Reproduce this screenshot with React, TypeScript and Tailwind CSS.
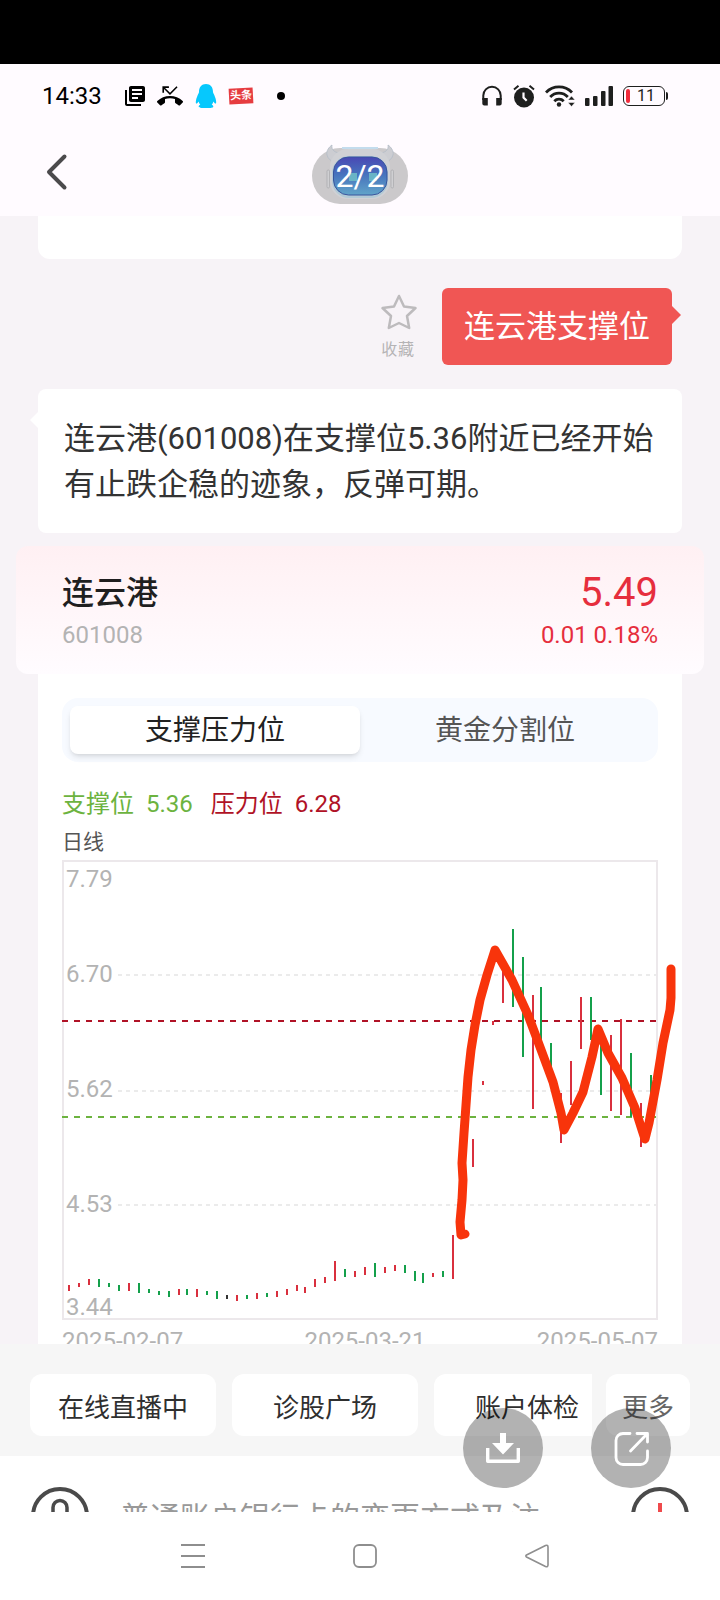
import { useState } from 'react';
import { MdLibraryBooks, MdPhoneMissed } from 'react-icons/md';

type Candle = [x: number, top: number, bottom: number, color: 'r' | 'g' | 'k'];

const COLORS = { r: '#d9303e', g: '#14a04b', k: '#333333' };

const CANDLES: Candle[] = [
    [7, 425, 431, 'r'], [17, 423, 427, 'r'], [27, 419, 425, 'r'], [37, 419, 427, 'g'],
    [47, 423, 427, 'g'], [57, 425, 431, 'g'], [67, 423, 431, 'r'], [77, 423, 433, 'g'],
    [87, 429, 433, 'g'], [97, 431, 435, 'g'], [107, 431, 437, 'g'], [117, 429, 435, 'r'],
    [125, 429, 435, 'g'], [135, 429, 437, 'r'], [145, 431, 435, 'g'], [155, 431, 439, 'g'],
    [165, 435, 439, 'k'], [175, 435, 441, 'r'], [185, 435, 439, 'g'], [195, 433, 439, 'r'],
    [205, 433, 437, 'g'], [215, 431, 437, 'r'], [225, 429, 435, 'r'], [235, 425, 431, 'r'],
    [243, 427, 433, 'r'], [253, 419, 427, 'r'], [263, 417, 423, 'r'], [273, 401, 421, 'r'],
    [283, 409, 417, 'g'], [293, 411, 417, 'r'], [303, 407, 415, 'r'], [313, 403, 417, 'g'],
    [323, 407, 413, 'r'], [333, 405, 411, 'r'], [343, 405, 413, 'g'], [353, 411, 421, 'g'],
    [361, 413, 423, 'g'], [371, 413, 417, 'r'], [381, 411, 417, 'g'], [391, 375, 419, 'r'],
    [411, 279, 307, 'r'], [421, 221, 225, 'r'], [431, 161, 165, 'r'], [441, 105, 143, 'r'],
    [451, 69, 147, 'g'], [461, 97, 197, 'g'], [471, 135, 249, 'r'], [479, 127, 187, 'g'],
    [489, 183, 215, 'g'], [499, 233, 283, 'r'], [509, 201, 245, 'r'], [519, 137, 189, 'r'],
    [529, 137, 180, 'g'], [539, 175, 235, 'g'], [549, 175, 251, 'r'], [559, 159, 255, 'r'],
    [569, 193, 257, 'g'], [579, 243, 287, 'r'], [589, 215, 240, 'g'],
];

// Trazo dibujado a mano sobre la gráfica
const MARKER =
    '403,374 399,375 398,362 400,340 401,320 400,303 402,273 406,217 409,190 413,165 418,140 425,115 433,90 450,120 466,155 478,187 491,222 499,253 502,270 511,253 521,232 530,197 536,169 546,193 560,218 573,248 580,270 583,279 587,263 595,220 601,183 608,150 609,138 609,109';

function StatusBar() {
    return (
        <div className="flex h-16 items-center pl-[42px] pr-[52px] text-[#1e1f1e]">
            <span className="w-[81px] text-2xl text-black">14:33</span>
            <MdLibraryBooks className="h-6 w-6 text-black" />
            <MdPhoneMissed className="ml-2.5 h-[26px] w-[26px] text-black" />
            <svg className="ml-3 h-6 w-[22px]" viewBox="0 0 22 24" fill="#06c8fd">
                <path d="M11 0C6.500 0 4 3 4 8c0 1-1 2-2 5-1 2.500-1.500 5-1 6.500.8.4 1.800-.8 2.600-2 .3 1.300.8 2.300 1.700 3.200-1 .4-1.600 1-1.600 2 0 1 2.300 1.300 7.300 1.300s7.300-.3 7.300-1.300c0-1-.6-1.600-1.600-2 .9-.9 1.400-1.900 1.700-3.200.8 1.200 1.800 2.400 2.600 2 .5-1.500 0-4-1-6.500-1-3-2-4-2-5 0-5-2.500-8-7-8z" />
            </svg>
            <span className="ml-3 flex h-4 w-6 -rotate-3 items-center justify-center bg-[#e63c40] text-[11px] font-bold text-white">
                头条
            </span>
            <span className="ml-6 h-2 w-2 rounded-full bg-black" />

            <div className="ml-auto flex items-center gap-2.5">
                <svg className="h-6 w-[22px]" viewBox="0 0 22 24" fill="currentColor">
                    <path d="M2.300 16v-4.500a8.700 8.700 0 0 1 17.400 0V16" fill="none" stroke="currentColor" strokeWidth="2" />
                    <path d="M1.300 14h5.500v7.500h-3.500a2 2 0 0 1-2-2zM15.200 14h5.500v5.500a2 2 0 0 1-2 2h-3.500z" />
                </svg>
                <svg className="h-6 w-[22px]" viewBox="0 0 22 24" fill="currentColor">
                    <circle cx="11" cy="13.500" r="10" />
                    <path d="M1 5.500 5.500 1.800M21 5.500l-4.500-3.700" stroke="currentColor" strokeWidth="2" />
                    <path d="M10.500 8.500v5l3.200 3.200" fill="none" stroke="#fffbff" strokeWidth="2.200" />
                </svg>
                <svg className="h-6 w-[30px]" viewBox="0 0 30 24" fill="none" stroke="currentColor" strokeWidth="2.800">
                    <path d="M1 8.500a18 18 0 0 1 26 0M5.200 13a12 12 0 0 1 17.600 0M9.300 17.200a6.500 6.500 0 0 1 9.400 0" />
                    <circle cx="14" cy="20.500" r="2.200" fill="currentColor" stroke="none" />
                    <path d="m23 16 3.500-4 3.500 4zM23 18.500l3.500 4 3.500-4z" fill="currentColor" stroke="#fffbff" strokeWidth="0.500" />
                </svg>
                <div className="flex items-center gap-2">
                    <svg className="h-6 w-7" viewBox="0 0 28 24" fill="currentColor">
                        <rect x="0" y="14" width="4.500" height="8" rx="1" />
                        <rect x="8" y="12" width="4.500" height="10" rx="1" />
                        <rect x="16" y="7" width="4.500" height="15" rx="1" />
                        <rect x="23.500" y="2" width="4.500" height="20" rx="1" />
                    </svg>
                    <div className="ml-0.5 flex items-center gap-px">
                        <div className="flex h-5 w-[42px] items-center rounded-md border border-[#1e1f1e] p-0.5">
                            <span className="h-full w-1 rounded-sm bg-[#f02c3c]" />
                            <span className="flex-1 text-center text-base leading-4">11</span>
                        </div>
                        <span className="h-2 w-0.5 rounded-r bg-[#1e1f1e]" />
                    </div>
                </div>
            </div>
        </div>
    );
}

function Header() {
    return (
        <header className="grid h-22 grid-cols-3 items-center px-10">
            <button className="w-8 text-[#4b4a4c]" aria-label="返回">
                <svg className="h-10 w-8" viewBox="0 0 32 40" fill="none" stroke="currentColor" strokeWidth="4" strokeLinecap="round" strokeLinejoin="round">
                    <path d="M24.500 4.500 9 20 24.500 35.500" />
                </svg>
            </button>
            {/* Mascota con el contador encima */}
            <div className="relative mt-2 flex h-14 w-24 items-center justify-center justify-self-center rounded-full bg-[#cbc9cb]">
                <svg className="absolute inset-0 h-full w-full overflow-visible" viewBox="0 0 96 56">
                    <defs>
                        <linearGradient id="screen" x1="0" y1="0" x2="0" y2="1">
                            <stop offset="0" stopColor="#4a48b4" />
                            <stop offset="0.450" stopColor="#4672bd" />
                            <stop offset="1" stopColor="#61a4c9" />
                        </linearGradient>
                    </defs>
                    <path d="M20-3c-3 2-6 6-5 10 1 4 4 6 7 7l7-9c-6 0-10-3-9-8zM76-3c3 2 6 6 5 10-1 4-4 6-7 7l-7-9c6 0 10-3 9-8z" fill="#cccdd2" stroke="#b4bdc8" strokeWidth="0.800" />
                    <path d="M30 0h36" stroke="#c3dced" strokeWidth="2" />
                    <rect x="15" y="22" width="2.500" height="18" rx="1.200" fill="#cfcfd2" stroke="#acacb0" strokeWidth="0.800" />
                    <rect x="79" y="22" width="2.500" height="18" rx="1.200" fill="#cfcfd2" stroke="#acacb0" strokeWidth="0.800" />
                    <rect x="18" y="1" width="60" height="50" rx="18" fill="#d0d1d5" />
                    <rect x="20" y="8" width="56" height="42" rx="17" fill="#b3cad6" />
                    <rect x="21.500" y="9" width="53.500" height="38" rx="15" fill="url(#screen)" stroke="#39559d" />
                    <rect x="37" y="25" width="8" height="8" fill="#69b4c6" />
                    <rect x="57" y="25" width="8" height="8" fill="#69b4c6" />
                </svg>
                <span className="relative text-[32px] leading-8 text-white">2/2</span>
            </div>
        </header>
    );
}

function Chart() {
    return (
        <svg className="mt-1 block w-full overflow-visible" viewBox="0 0 596 496">
            <rect x="1" y="1" width="594" height="458" fill="none" stroke="#ece8eb" strokeWidth="2" />
            {[115, 231, 345].map((y) => (
                <line key={y} x1="56" x2="594" y1={y} y2={y} stroke="#ebebeb" strokeWidth="2" strokeDasharray="4 4" />
            ))}
            <line x1="0" x2="596" y1="161" y2="161" stroke="#b01226" strokeWidth="2" strokeDasharray="6 6" />
            <line x1="0" x2="596" y1="257" y2="257" stroke="#6cb33f" strokeWidth="2" strokeDasharray="6 6" />
            {CANDLES.map(([x, top, bottom, color]) => (
                <line key={x} x1={x} x2={x} y1={top} y2={bottom} stroke={COLORS[color]} strokeWidth="2" />
            ))}
            <g fill="#b3b3b3" fontSize="24">
                <text x="4" y="27">7.79</text>
                <text x="4" y="122">6.70</text>
                <text x="4" y="237">5.62</text>
                <text x="4" y="352">4.53</text>
                <text x="4" y="455">3.44</text>
                <text x="0" y="489">2025-02-07</text>
                <text x="303" y="489" textAnchor="middle">2025-03-21</text>
                <text x="596" y="489" textAnchor="end">2025-05-07</text>
            </g>
            <polyline points={MARKER} fill="none" stroke="#f8340b" strokeWidth="9" strokeLinecap="round" strokeLinejoin="round" />
        </svg>
    );
}

function StockPanel() {
    const [tab, setTab] = useState(0);

    return (
        <section>
            <div className="mx-4 flex h-32 items-center justify-between rounded-xl bg-gradient-to-b from-[#fff0f3] to-[#fffcff] px-[46px] pt-1.5">
                <div>
                    <h2 className="text-[32px] font-medium leading-11 text-[#1f1f1f]">连云港</h2>
                    <p className="text-2xl leading-10 text-[#b3b3b3]">601008</p>
                </div>
                <div className="text-right text-[#e62e3d]">
                    <p className="text-[40px] leading-11">5.49</p>
                    <p className="text-2xl leading-10">0.01 0.18%</p>
                </div>
            </div>

            <div className="mx-[38px] bg-white px-6 pt-6">
                <div role="tablist" className="grid h-16 grid-cols-2 rounded-2xl bg-[#f7faff] p-2">
                    {['支撑压力位', '黄金分割位'].map((label, i) => (
                        <button
                            key={label}
                            role="tab"
                            aria-selected={tab === i}
                            onClick={() => setTab(i)}
                            className={
                                tab === i
                                    ? 'rounded-lg bg-white pt-0.5 text-[28px] text-[#222222] shadow-md shadow-black/10'
                                    : 'rounded-lg pt-0.5 text-[28px] text-[#555555]'
                            }
                        >
                            {label}
                        </button>
                    ))}
                </div>

                <div className="mt-[26px] flex text-2xl leading-8">
                    <span className="text-[#6cb33f]">支撑位</span>
                    <span className="ml-3 text-[#6cb33f]">5.36</span>
                    <span className="ml-[18px] text-[#b01226]">压力位</span>
                    <span className="ml-3 text-[#b01226]">6.28</span>
                </div>
                <p className="mt-2 text-[21px] leading-7 text-[#555555]">日线</p>
                <Chart />
            </div>
        </section>
    );
}

function BottomDock() {
    return (
        <div className="relative shrink-0">
            <div className="flex h-28 gap-3.5 bg-[#f6f6f6] px-[30px] pb-5 pt-[30px] text-[26px] text-[#2f2f2f]">
                <div className="flex min-w-0 flex-1 gap-4 overflow-hidden">
                    {['在线直播中', '诊股广场', '账户体检'].map((label) => (
                        <button key={label} className="w-[186px] shrink-0 rounded-xl bg-white pb-0.5 pt-2">
                            {label}
                        </button>
                    ))}
                </div>
                <button className="w-21 shrink-0 rounded-xl bg-white pb-0.5 pt-2 text-[#666666]">更多</button>
            </div>

            <div className="flex h-14 items-start overflow-hidden bg-white px-[30px] pt-[30px]">
                <button className="shrink-0" aria-label="语音输入">
                    <svg className="h-[60px] w-[60px]" viewBox="0 0 60 60" fill="none" stroke="#4a4a4a">
                        <circle cx="30" cy="30" r="27" strokeWidth="4" />
                        <rect x="23" y="14.500" width="14" height="24" rx="7" strokeWidth="3.500" />
                        <path d="M17 30a13 13 0 0 0 26 0M30 43v6" strokeWidth="3" />
                    </svg>
                </button>
                <input
                    type="text"
                    aria-label="输入问题"
                    placeholder="普通账户银行卡的变更方式及注"
                    className="mx-[30px] h-[62px] min-w-0 flex-1 bg-transparent text-[30px] outline-none placeholder:text-[#999999]"
                />
                <button className="shrink-0" aria-label="更多功能">
                    <svg className="h-[60px] w-[60px]" viewBox="0 0 60 60" fill="none">
                        <circle cx="30" cy="30" r="27" stroke="#4a4a4a" strokeWidth="4" />
                        <path d="M30 17v26M17 30h26" stroke="#ef4a4c" strokeWidth="4" />
                    </svg>
                </button>
            </div>

            {/* Botones flotantes del visor */}
            <div className="absolute right-[49px] top-16 flex gap-12 text-white">
                <button className="flex h-20 w-20 items-center justify-center rounded-full bg-black/30" aria-label="下载">
                    <svg className="h-9 w-9" viewBox="0 0 36 36">
                        <path d="M15 3h6v10h8L18 24.500 7 13h8z" fill="currentColor" />
                        <path d="M2.700 18v13.300h30.600V18" fill="none" stroke="currentColor" strokeWidth="3.400" strokeLinejoin="round" />
                    </svg>
                </button>
                <button className="flex h-20 w-20 items-center justify-center rounded-full bg-black/30" aria-label="分享">
                    <svg className="h-9 w-9" viewBox="0 0 36 36" fill="none" stroke="currentColor" strokeWidth="2.800" strokeLinecap="round" strokeLinejoin="round">
                        <path d="M17 3.500H10A7 7 0 0 0 3 10.500v17a7 7 0 0 0 7 7h17.500a7 7 0 0 0 7-7V21" />
                        <path d="M17.500 21 34 4M24 3.500h10.500V12" />
                    </svg>
                </button>
            </div>
        </div>
    );
}

export default function App() {
    return (
        <div className="flex h-screen flex-col bg-white font-['Roboto','Noto_Sans_CJK_SC',sans-serif]">
            <div className="h-16 shrink-0 bg-black" />
            <div className="shrink-0 bg-[#fffbff]">
                <StatusBar />
                <Header />
            </div>

            <main className="min-h-0 flex-1 overflow-hidden bg-[#f7f3f7]">
                <div className="mx-[38px] h-[43px] rounded-b-xl bg-white" />

                <div className="mr-12 mt-[29px] flex items-start justify-end gap-6">
                    <button className="mt-1 flex flex-col items-center text-[#b5b3b5]">
                        <svg className="h-10 w-10" viewBox="0 0 40 40" fill="none" stroke="#bdbbbd" strokeWidth="2.500" strokeLinejoin="round">
                            <path d="m21 4 5 10.500 11.500 1.500-8.500 8 2.200 12L21 31l-10.200 5L13 24l-8.500-8L16 14.500z" />
                        </svg>
                        <span className="mt-1.5 text-base leading-6 tracking-wider">收藏</span>
                    </button>
                    <div className="relative rounded-md bg-[#f05654] px-[22px] py-4 text-[31px] leading-[45px] text-white">
                        连云港支撑位
                        <svg className="absolute -right-[9px] top-[18px] h-[18px] w-2.5" viewBox="0 0 10 18" fill="#f05654">
                            <path d="M0 0h1l9 9-9 9h-1z" />
                        </svg>
                    </div>
                </div>

                <div className="relative mx-[38px] mb-[13px] mt-6 rounded-lg bg-white pb-[25px] pl-[26px] pr-5 pt-[27px] text-[31px] leading-[46px] text-[#333333]">
                    <svg className="absolute -left-2 top-[22px] h-[18px] w-[9px]" viewBox="0 0 9 18" fill="#ffffff">
                        <path d="M9 0L0 9l9 9z" />
                    </svg>
                    连云港(601008)在支撑位5.36附近已经开始有止跌企稳的迹象，反弹可期。
                </div>

                <StockPanel />
            </main>

            <BottomDock />

            <nav className="flex h-22 shrink-0 items-center justify-center gap-[148px] bg-white pl-2.5 text-[#8e8e8e]">
                <button aria-label="最近任务">
                    <svg className="h-6 w-6" viewBox="0 0 24 24" stroke="currentColor" strokeWidth="2">
                        <path d="M0 1h24M0 12h24M0 23h24" />
                    </svg>
                </button>
                <button aria-label="主屏幕">
                    <svg className="h-6 w-6" viewBox="0 0 24 24" fill="none" stroke="currentColor" strokeWidth="1.800">
                        <rect x="1" y="1" width="22" height="22" rx="5" />
                    </svg>
                </button>
                <button aria-label="返回上一页">
                    <svg className="h-6 w-6" viewBox="0 0 24 24" fill="none" stroke="currentColor" strokeWidth="1.600" strokeLinejoin="round">
                        <path d="M1.500 11 20.500 1.500Q23 .7 23 3v18q0 2.300-2.500 1.500L1.500 13q-1.300-1 0-2z" />
                    </svg>
                </button>
            </nav>
        </div>
    );
}
